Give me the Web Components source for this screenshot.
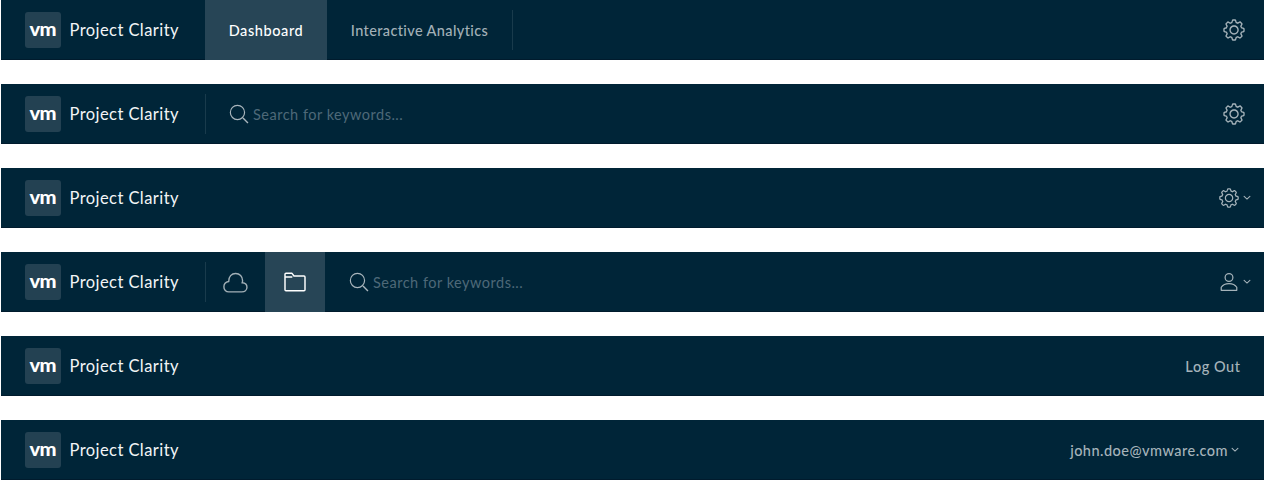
<!DOCTYPE html>
<html lang="en"><head><meta charset="utf-8"><title>Project Clarity headers</title>
<style>html,body{margin:0}body{background:#fff;overflow:hidden;padding-left:1px;font-family:Lato,"Open Sans",sans-serif}</style></head>
<body><header-gallery></header-gallery>
<script>
const icons={
cog:'<g fill="currentColor"><path d="M18.1,11c-3.9,0-7,3.1-7,7s3.1,7,7,7c3.9,0,7-3.1,7-7S22,11,18.1,11z M18.1,23c-2.8,0-5-2.2-5-5s2.2-5,5-5c2.8,0,5,2.2,5,5S20.9,23,18.1,23z"/><path d="M32.8,14.7L30,13.8l-0.6-1.5l1.4-2.6c0.3-0.6,0.2-1.4-0.3-1.9l-2.4-2.4c-0.5-0.5-1.3-0.6-1.9-0.3l-2.6,1.4l-1.5-0.6l-0.9-2.8C21,2.5,20.4,2,19.7,2h-3.4c-0.7,0-1.3,0.5-1.4,1.2L14,6c-0.6,0.1-1.1,0.3-1.6,0.6L9.8,5.2C9.2,4.9,8.4,5,7.9,5.5L5.5,7.9C5,8.4,4.9,9.2,5.2,9.8l1.3,2.5c-0.2,0.5-0.4,1.1-0.6,1.6l-2.8,0.9C2.5,15,2,15.6,2,16.3v3.4c0,0.7,0.5,1.3,1.2,1.5L6,22.1l0.6,1.5l-1.4,2.6c-0.3,0.6-0.2,1.4,0.3,1.9l2.4,2.4c0.5,0.5,1.3,0.6,1.9,0.3l2.6-1.4l1.5,0.6l0.9,2.9c0.2,0.6,0.8,1.1,1.5,1.1h3.4c0.7,0,1.3-0.5,1.5-1.1l0.9-2.9l1.5-0.6l2.6,1.4c0.6,0.3,1.4,0.2,1.9-0.3l2.4-2.4c0.5-0.5,0.6-1.3,0.3-1.9l-1.4-2.6l0.6-1.5l2.9-0.9c0.6-0.2,1.1-0.8,1.1-1.5v-3.4C34,15.6,33.5,14.9,32.8,14.7z M32,19.4l-3.6,1.1L28.3,21c-0.3,0.7-0.6,1.4-0.9,2.1l-0.3,0.5l1.8,3.3l-2,2l-3.3-1.8l-0.5,0.3c-0.7,0.4-1.4,0.7-2.1,0.9l-0.5,0.1L19.4,32h-2.8l-1.1-3.6L15,28.3c-0.7-0.3-1.4-0.6-2.1-0.9l-0.5-0.3l-3.3,1.8l-2-2l1.8-3.3l-0.3-0.5c-0.4-0.7-0.7-1.4-0.9-2.1l-0.1-0.5L4,19.4v-2.8l3.4-1l0.2-0.5c0.2-0.8,0.5-1.5,0.9-2.2l0.3-0.5L7.1,9.1l2-2l3.2,1.8l0.5-0.3c0.7-0.4,1.4-0.7,2.2-0.9l0.5-0.2L16.6,4h2.8l1.1,3.5L21,7.7c0.7,0.2,1.4,0.5,2.1,0.9l0.5,0.3l3.3-1.8l2,2l-1.8,3.3l0.3,0.5c0.4,0.7,0.7,1.4,0.9,2.1l0.1,0.5l3.6,1.1V19.4z"/></g>',
search:'<g fill="none" stroke="currentColor" stroke-width="2"><circle cx="14.5" cy="14.5" r="12.2"/><path d="M24 24l8.5 8.5" stroke-width="2.4"/></g>',
cloud:'<path fill="none" stroke="currentColor" stroke-width="2" d="M8.5 31.5a7 7 0 0 1-7.2-7.4c0-4.4 3.2-7 6.9-7.6C8 9.500 12.400 5 18.200 5s10 4.400 10 10.200c0 1.300-.2 2.200-.6 3.100 4.200.3 6.900 3 6.900 6.400 0 4.300-3.400 6.800-7.400 6.800z"/>',
folder:'<path fill="none" stroke="currentColor" stroke-width="2.2" stroke-linejoin="round" d="M3 29.5V6.5Q3 5 4.500 5h9l3 4h15Q33 9 33 10.500V29.500Q33 31 31.500 31h-27Q3 31 3 29.500M3 10.500h11"/>',
user:'<path fill="none" stroke="currentColor" stroke-width="2.2" stroke-linejoin="round" d="M18 3a7 7 0 1 1 0 14 7 7 0 0 1 0-14M4 33V27.5c3-4.5 8-6.5 14-6.5S29 23 32 27.5V33z"/>',
caret:'<path fill="none" stroke="currentColor" stroke-width="5" stroke-linecap="round" d="M5 11l13 12 13-12"/>'};
function define(name,css,html){customElements.define(name,class extends HTMLElement{constructor(){super();this.attachShadow({mode:'open'}).innerHTML=`<style>${css}</style>${html}`}})}
customElements.define('ui-icon',class extends HTMLElement{constructor(){super();this.attachShadow({mode:'open'})}connectedCallback(){const s=this.getAttribute('size')||24;this.shadowRoot.innerHTML=`<style>:host{display:block;flex:none;width:${s}px;height:${s}px}svg{display:block;width:100%;height:100%}</style><svg viewBox="0 0 36 36">${icons[this.getAttribute('name')]}</svg>`}});
define('header-brand',':host{display:flex;align-items:center;width:204px;box-sizing:border-box;padding-left:24px;color:#fff;flex:none}.logo{display:flex;align-items:center;justify-content:center;width:36px;height:36px;border-radius:3px;background:#234152;margin-right:8.5px;font:900 18px/34px Lato,sans-serif}.logo b{display:block;font-weight:900;height:36px;transform:scaleX(1.12);letter-spacing:-.8px}.title{font-size:16.5px;line-height:24px;white-space:nowrap;letter-spacing:.43px;padding-bottom:1px;color:#f2f5f6}','<span class="logo"><b>vm</b></span><span class="title">Project Clarity</span>');
define('nav-tab',':host{display:flex;align-items:center;justify-content:center;height:60px;padding:0 24px;box-sizing:border-box;color:#a2b0b7;font-size:14.5px;font-weight:500;white-space:nowrap;flex:none}:host([active]){background:#274556;color:#fff}:host([icon]){width:60px;padding:0}','<slot></slot>');
define('nav-divider',':host{display:block;width:1px;height:40px;background:#193b4c;align-self:center;flex:none}','');
define('search-field',':host{display:flex;align-items:center;gap:3px;padding-left:24px;color:#aab6bd}.hint{font-size:14.5px;color:#4e6978;line-height:20px;padding-top:2px;letter-spacing:.5px;white-space:nowrap}','<ui-icon name="search" size="21"></ui-icon><span class="hint"><slot></slot></span>');
define('header-actions',':host{display:flex;align-items:center;margin-left:auto;padding-right:18px;gap:3px;color:#a5b3ba;font-size:14.5px;font-weight:500;white-space:nowrap}:host([menu]){padding-right:13px}:host([text]){padding:0 23.5px 0 0;letter-spacing:.55px}','<slot></slot>');
define('clarity-header',':host{display:flex;height:60px;box-sizing:border-box;background:#002538;box-shadow:inset 0 -1px #001b2d}','<header-brand></header-brand><slot></slot>');
define('header-gallery',':host{display:flex;flex-direction:column;gap:24px}',`
<clarity-header><nav-tab active style="width:122px;letter-spacing:.6px">Dashboard</nav-tab><nav-tab style="width:185px;letter-spacing:.38px">Interactive Analytics</nav-tab><nav-divider></nav-divider><header-actions><ui-icon name="cog"></ui-icon></header-actions></clarity-header>
<clarity-header><nav-divider></nav-divider><search-field style="padding-left:23px">Search for keywords...</search-field><header-actions><ui-icon name="cog"></ui-icon></header-actions></clarity-header>
<clarity-header><header-actions menu><ui-icon name="cog" size="22"></ui-icon><ui-icon name="caret" size="8"></ui-icon></header-actions></clarity-header>
<clarity-header><nav-divider></nav-divider><nav-tab icon style="width:59px"><ui-icon name="cloud" size="25" style="margin-right:1px"></ui-icon></nav-tab><nav-tab icon active><ui-icon name="folder"></ui-icon></nav-tab><search-field>Search for keywords...</search-field><header-actions menu><ui-icon name="user" size="20" style="margin-right:1px"></ui-icon><ui-icon name="caret" size="8"></ui-icon></header-actions></clarity-header>
<clarity-header><header-actions text>Log Out</header-actions></clarity-header>
<clarity-header><header-actions text style="padding-right:25px;letter-spacing:.47px"><span>john.doe@vmware.com</span><ui-icon name="caret" size="8"></ui-icon></header-actions></clarity-header>`);
</script></body></html>
